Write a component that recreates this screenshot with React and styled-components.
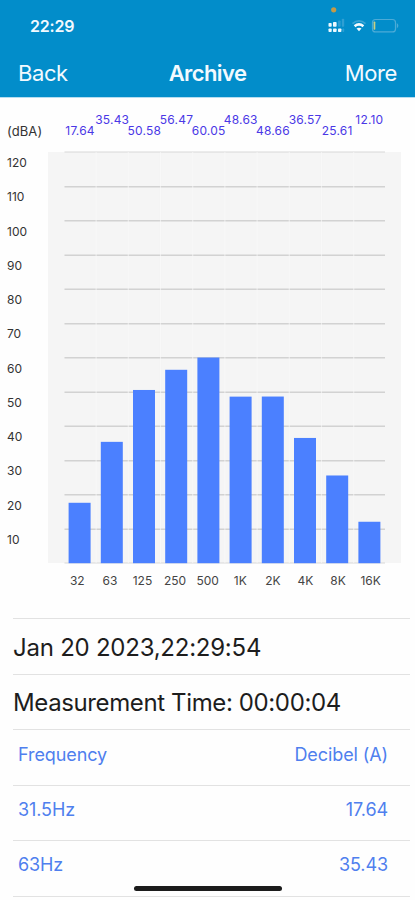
import React from "react";
import styled, { createGlobalStyle } from "styled-components";

const bands = [
  { label: "32", value: "17.64" },
  { label: "63", value: "35.43" },
  { label: "125", value: "50.58" },
  { label: "250", value: "56.47" },
  { label: "500", value: "60.05" },
  { label: "1K", value: "48.63" },
  { label: "2K", value: "48.66" },
  { label: "4K", value: "36.57" },
  { label: "8K", value: "25.61" },
  { label: "16K", value: "12.10" },
];

const scale = [120, 110, 100, 90, 80, 70, 60, 50, 40, 30, 20, 10];

const readings = [
  { name: "Frequency", value: "Decibel (A)", height: 56.5, top: 14 },
  { name: "31.5Hz", value: "17.64", height: 55, top: 13 },
  { name: "63Hz", value: "35.43", height: 56, top: 13 },
];

const STEP = 34.25;
const COLUMN = 32.2;

const StatusIcons = () => (
  <svg width="80" height="32" viewBox="320 4 80 32">
    <circle cx="333.7" cy="9.8" r="2.6" fill="#c39a48" />
    <g fill="#eef9ff">
      <rect x="328.5" y="23" width="3.2" height="3.8" rx="0.8" />
      <rect x="333" y="22" width="3.6" height="4.8" rx="0.8" />
      <rect x="328.5" y="28.4" width="3.2" height="3.6" rx="0.8" />
      <rect x="333" y="28.4" width="3.6" height="3.6" rx="0.8" />
      <rect x="338" y="28.4" width="3.4" height="3.6" rx="0.8" />
    </g>
    <g fill="#2f9fd3">
      <rect x="338" y="20.5" width="2.6" height="6.3" rx="0.8" />
      <rect x="341.8" y="18.8" width="2.4" height="8" rx="0.8" />
      <rect x="342.4" y="28.4" width="1.8" height="3.6" rx="0.8" />
    </g>
    <path d="M352.5 23.6Q359 18.2 365.5 23.6" fill="none" stroke="#39a4d5" strokeWidth="1.8" />
    <path d="M354.6 26.2Q359 22.7 363.4 26.2" fill="none" stroke="#f4fbff" strokeWidth="2.7" />
    <path d="M356.5 28.6Q359 26.8 361.5 28.6L359 31.2Z" fill="#f4fbff" />
    <rect x="372.5" y="19.5" width="23" height="12.4" rx="3" fill="none" stroke="#4cabd7" strokeWidth="1.2" />
    <rect x="373.6" y="21.4" width="1.7" height="8.4" rx="0.8" fill="#c8cf83" />
    <path d="M396.8 23Q400 25.7 396.8 28.4Z" fill="#4cabd7" />
  </svg>
);

const Plot = () => (
  <svg width="353" height="414" viewBox="48 151 353 414">
    <rect x="48" y="152" width="353" height="411" fill="#f5f5f5" />
    {[...Array(13)].map((_, i) => (
      <rect
        key={i}
        x="64.5"
        y={Math.round((151.7 + i * STEP) * 2) / 2}
        width="320.5"
        height={i === 0 || i === 12 ? 1 : 1.5}
        fill={i === 0 || i === 12 ? "#d8d8d8" : "#d2d2d2"}
      />
    ))}
    {bands.slice(1).map((band, i) => (
      <rect
        key={band.label}
        x={95.5 + i * COLUMN}
        y="152"
        width="1.2"
        height="411"
        fill="#fafafa"
        opacity="0.6"
      />
    ))}
    {bands.map((band, i) => (
      <rect
        key={band.label}
        x={68.6 + i * COLUMN}
        y={563.2 - (band.value * STEP) / 10}
        width="22"
        height={(band.value * STEP) / 10}
        fill="#4b80ff"
      />
    ))}
  </svg>
);

const App = () => {
  return (
    <Screen>
      <GlobalStyle />
      <Header>
        <StatusBar>
          <Clock>22:29</Clock>
          <StatusIcons />
        </StatusBar>
        <NavBar>
          <NavButton>Back</NavButton>
          <Title>Archive</Title>
          <NavButton $right>More</NavButton>
        </NavBar>
      </Header>
      <Chart>
        <Axis>
          <Unit>(dBA)</Unit>
          {scale.map((level) => (
            <Level key={level}>{level}</Level>
          ))}
        </Axis>
        <div>
          <Values>
            {bands.map((band, i) => (
              <Value key={band.label} $raised={i % 2 === 1}>
                {band.value}
              </Value>
            ))}
          </Values>
          <Plot />
          <Bands>
            {bands.map((band) => (
              <span key={band.label}>{band.label}</span>
            ))}
          </Bands>
        </div>
      </Chart>
      <List>
        <Info $height={56} $spacing={-0.24}>
          Jan 20 2023,22:29:54
        </Info>
        <Info $height={54.5} $spacing={-0.38}>
          Measurement Time: 00:00:04
        </Info>
        {readings.map((row) => (
          <Row key={row.name} $height={row.height} $top={row.top}>
            <Cell>{row.name}</Cell>
            <Cell>{row.value}</Cell>
          </Row>
        ))}
      </List>
      <HomeIndicator />
    </Screen>
  );
};

const GlobalStyle = createGlobalStyle`
  * {
    box-sizing: border-box;
  }

  body {
    margin: 0;
    background: #fefefe;
    font-family: Inter, "Liberation Sans", sans-serif;
  }

  svg {
    display: block;
  }
`;

const Screen = styled.div`
  position: relative;
  width: 415px;
  height: 900px;
  overflow: hidden;
  background: #fefefe;
`;

const Header = styled.header`
  height: 98px;
  background: #028dca;
  border-bottom: 1px solid #b5ddf0;
  color: #f2faff;
`;

const StatusBar = styled.div`
  display: flex;
  justify-content: space-between;
  height: 48px;
  padding: 4px 15px 0 30px;
`;

const Clock = styled.span`
  margin-top: 12px;
  font-size: 16px;
  line-height: 20px;
  font-weight: 600;
  letter-spacing: -0.2px;
`;

const NavBar = styled.nav`
  display: grid;
  grid-template-columns: 1fr auto 1fr;
  align-items: center;
  height: 49px;
  padding: 0 18px;
`;

const NavButton = styled.span`
  font-size: 22px;
  letter-spacing: -0.4px;
  text-align: ${(props) => (props.$right ? "right" : "left")};
`;

const Title = styled.h1`
  margin: 0;
  font-size: 22px;
  font-weight: 600;
  letter-spacing: -0.6px;
`;

const Chart = styled.section`
  display: flex;
  height: 520px;
  padding-top: 14px;
`;

const Axis = styled.div`
  width: 48px;
  padding: 9px 0 0 7px;
  font-size: 12px;
  color: #333;
`;

const Unit = styled.div`
  height: 25px;
  font-size: 13px;
  line-height: 20px;
  letter-spacing: 0.1px;
`;

const Level = styled.div`
  height: 34.27px;
  line-height: 34.27px;
`;

const Values = styled.div`
  display: grid;
  grid-template-columns: repeat(10, 32.15px);
  height: 39px;
  padding-left: 16px;
`;

const Value = styled.span`
  display: flex;
  justify-content: center;
  padding-top: ${(props) => (props.$raised ? 0 : 11)}px;
  font-size: 12px;
  line-height: 15px;
  letter-spacing: 0.2px;
  color: #4a38e6;
`;

const Bands = styled.div`
  display: grid;
  grid-template-columns: repeat(10, 32.6px);
  padding: 8px 0 0 13px;
  font-size: 12px;
  line-height: 15px;
  text-align: center;
  color: #444;
`;

const List = styled.section`
  margin: 0 5px 0 13px;
  border-top: 1px solid #e2e2e2;
`;

const Info = styled.div`
  display: flex;
  align-items: center;
  height: ${(props) => props.$height}px;
  padding-top: 1px;
  border-bottom: 1px solid #e2e2e2;
  font-size: 24px;
  letter-spacing: ${(props) => props.$spacing}px;
  white-space: nowrap;
  color: #1d1d1d;
`;

const Row = styled.div`
  display: flex;
  justify-content: space-between;
  height: ${(props) => props.$height}px;
  padding: ${(props) => props.$top}px 22px 0 5px;
  border-bottom: 1px solid #e2e2e2;
`;

const Cell = styled.span`
  font-size: 18px;
  line-height: 22px;
  letter-spacing: -0.1px;
  color: #4f7fee;
`;

const HomeIndicator = styled.div`
  position: absolute;
  left: 134px;
  top: 886px;
  width: 148px;
  height: 5px;
  border-radius: 3px;
  background: #1c1c1c;
`;

export default App;
